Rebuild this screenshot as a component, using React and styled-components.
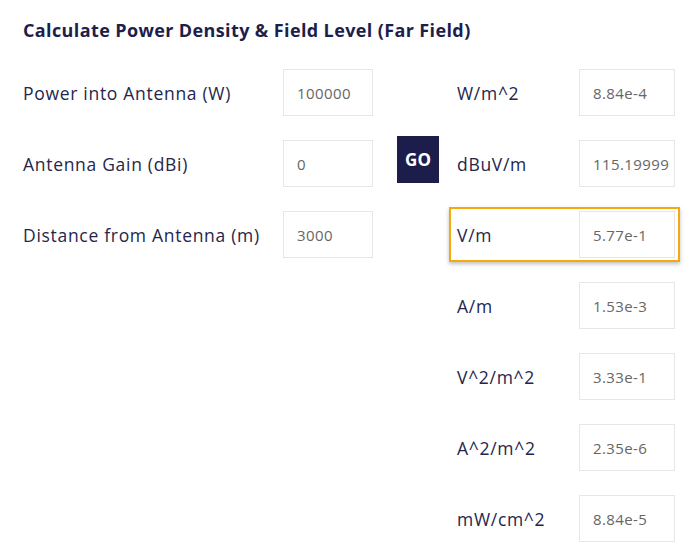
import React from "react";
import styled, { createGlobalStyle } from "styled-components";

const Global = createGlobalStyle`
  html, body { margin: 0; padding: 0; background: #ffffff; }
  body { font-family: "Open Sans", "Liberation Sans", sans-serif; }
`;

const Page = styled.div`
  width: 700px;
  height: 549px;
  box-sizing: border-box;
  padding: 18px 0 0 23px;
  overflow: hidden;
`;

const Title = styled.h2`
  margin: 0 0 23px 0;
  font-size: 18px;
  line-height: 24px;
  font-weight: 700;
  letter-spacing: 0.38px;
  color: #1d1e4b;
`;

const Layout = styled.div`
  display: flex;
  align-items: flex-start;
`;

const LeftColumn = styled.div`
  display: flex;
  flex-direction: column;
  gap: 24px;
  padding-top: 4px;
`;

const InputRow = styled.div`
  display: flex;
  align-items: center;
  height: 47px;
`;

const Label = styled.span`
  width: ${(p) => p.$w}px;
  flex: none;
  font-size: 17.5px;
  letter-spacing: 0.7px;
  color: #25264b;
  white-space: nowrap;
`;

const Field = styled.input`
  box-sizing: border-box;
  width: ${(p) => p.$w}px;
  height: 47px;
  flex: none;
  border: 1px solid #e6e6e6;
  background: #fff;
  padding: 0 0 0 13px;
  font-family: "Open Sans", "Liberation Sans", sans-serif;
  font-size: 15px;
  letter-spacing: 0.4px;
  color: #666666;
  outline: none;
`;

const GoColumn = styled.div`
  padding: 71px 18px 0 24px;
`;

const GoButton = styled.button`
  width: 42px;
  height: 47px;
  border: none;
  background: #1c1d4a;
  color: #ffffff;
  font-family: "Open Sans", "Liberation Sans", sans-serif;
  font-weight: 700;
  font-size: 17px;
  padding: 0;
`;

const RightColumn = styled.div`
  display: flex;
  flex-direction: column;
  gap: 16px;
  margin-left: -8px;
`;

const ResultRow = styled.div`
  display: flex;
  align-items: center;
  padding: 2px 3px 2px 6px;
  border: 2px solid ${(p) => (p.$active ? "#f5a80f" : "transparent")};
  box-shadow: ${(p) => (p.$active ? "0 2px 4px rgba(0,0,0,0.25)" : "none")};
`;

const inputs = [
  ["Power into Antenna (W)", "100000"],
  ["Antenna Gain (dBi)", "0"],
  ["Distance from Antenna (m)", "3000"],
];

const results = [
  ["W/m^2", "8.84e-4"],
  ["dBuV/m", "115.19999"],
  ["V/m", "5.77e-1", true],
  ["A/m", "1.53e-3"],
  ["V^2/m^2", "3.33e-1"],
  ["A^2/m^2", "2.35e-6"],
  ["mW/cm^2", "8.84e-5"],
];

export default function App() {
  return (
    <Page>
      <Global />
      <Title>Calculate Power Density &amp; Field Level (Far Field)</Title>
      <Layout>
        <LeftColumn>
          {inputs.map(([l, v]) => (
            <InputRow key={l}>
              <Label $w={260}>{l}</Label>
              <Field $w={90} defaultValue={v} />
            </InputRow>
          ))}
        </LeftColumn>
        <GoColumn>
          <GoButton>GO</GoButton>
        </GoColumn>
        <RightColumn>
          {results.map(([l, v, a]) => (
            <ResultRow key={l} $active={a}>
              <Label $w={122}>{l}</Label>
              <Field $w={96} readOnly defaultValue={v} />
            </ResultRow>
          ))}
        </RightColumn>
      </Layout>
    </Page>
  );
}
